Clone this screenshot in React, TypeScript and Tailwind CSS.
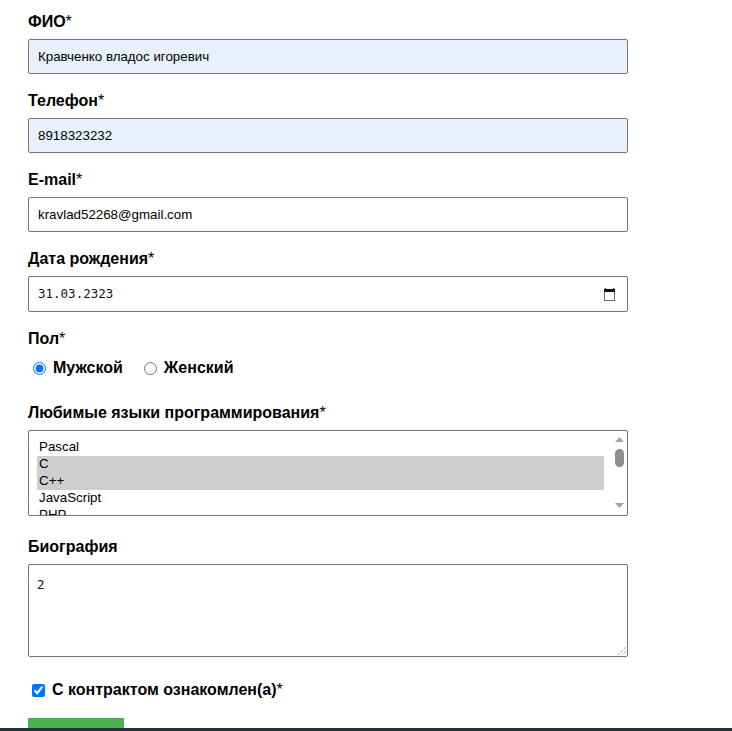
import React from "react";

function Label({ text, req = true }: { text: string; req?: boolean }) {
  return (
    <div className="text-[16px] leading-[18px] font-bold text-black">
      {text}
      {req && <span className="font-normal">*</span>}
    </div>
  );
}

function TextBox({ value, filled }: { value: string; filled?: boolean }) {
  return (
    <div
      className={
        "mt-[8px] h-[35px] w-[600px] border border-[#767676] rounded-[2px] pl-[9px] pr-[8px] flex items-center text-[13.333px] text-black " +
        (filled ? "bg-[#e8f0fe]" : "bg-white")
      }
    >
      {value}
    </div>
  );
}

export default function App() {
  const langs = ["Pascal", "C", "C++", "JavaScript", "PHP"];
  const selected = ["C", "C++"];
  return (
    <div className="relative h-[731px] w-full overflow-hidden bg-white font-['Liberation_Sans',Arial,sans-serif] text-black">
      <div className="pl-[28px] pt-[13px] w-[628px]">
        <Label text="ФИО" />
        <TextBox value="Кравченко владос игоревич" filled />

        <div className="mt-[18px]">
          <Label text="Телефон" />
          <TextBox value="8918323232" filled />
        </div>

        <div className="mt-[18px]">
          <Label text="E-mail" />
          <TextBox value="kravlad52268@gmail.com" />
        </div>

        <div className="mt-[18px]">
          <Label text="Дата рождения" />
          <div className="mt-[8px] h-[36px] w-[600px] border border-[#767676] rounded-[2px] pl-[9px] pr-[12px] flex items-center justify-between bg-white">
            <span className="font-['DejaVu_Sans_Mono',monospace] text-[12.5px] text-[#111]">31.03.2323</span>
            <svg width="11" height="13" viewBox="0 0 11 13">
              <rect x="0.5" y="1.5" width="10" height="11" fill="none" stroke="#6e6e6e" strokeWidth="1" />
              <rect x="0" y="1" width="11" height="3" fill="#111" />
              <rect x="1" y="0" width="1" height="2" fill="#111" />
              <rect x="9" y="0" width="1" height="2" fill="#111" />
            </svg>
          </div>
        </div>

        <div className="mt-[18px]">
          <Label text="Пол" />
          <div className="mt-[11px] h-[18px] flex items-center">
            <input type="radio" checked readOnly className="m-0 ml-[5px] w-[13px] h-[13px]" />
            <span className="ml-[7px] text-[16px] leading-[18px] font-bold">Мужской</span>
            <input type="radio" checked={false} readOnly className="m-0 ml-[21px] w-[13px] h-[13px]" />
            <span className="ml-[7px] text-[16px] leading-[18px] font-bold">Женский</span>
          </div>
        </div>

        <div className="mt-[27px]">
          <Label text="Любимые языки программирования" />
          <div className="mt-[8px] h-[86px] w-[600px] border border-[#767676] rounded-[2px] bg-white flex overflow-hidden">
            <div className="flex-1 pl-[8px] pr-[8px] pt-[8px] overflow-hidden">
              {langs.map((l) => (
                <div
                  key={l}
                  className={
                    "h-[17px] leading-[15px] px-[2px] text-[13.333px] text-black " +
                    (selected.includes(l) ? "bg-[#cecece]" : "")
                  }
                >
                  {l}
                </div>
              ))}
            </div>
            <div className="w-[15px] flex flex-col items-center pt-[6px] pb-[7px]">
              <svg width="9" height="5" viewBox="0 0 9 5">
                <polygon points="4.5,0 9,5 0,5" fill="#a3a3a3" />
              </svg>
              <div className="mt-[7px] h-[18px] w-[9px] rounded-full bg-[#8f8f8f]" />
              <div className="flex-1" />
              <svg width="9" height="5" viewBox="0 0 9 5">
                <polygon points="0,0 9,0 4.5,5" fill="#a3a3a3" />
              </svg>
            </div>
          </div>
        </div>

        <div className="mt-[22px]">
          <Label text="Биография" req={false} />
          <div className="relative mt-[8px] h-[93px] w-[600px] border border-[#767676] rounded-[2px] bg-white px-[8px] pt-[7px]">
            <span className="font-['DejaVu_Sans_Mono',monospace] text-[12.5px] leading-[15px] text-[#111]">2</span>
            <svg className="absolute right-[1px] bottom-[1px]" width="9" height="9" viewBox="0 0 9 9">
              <line x1="9" y1="1" x2="1" y2="9" stroke="#7a7a7a" strokeWidth="1" strokeDasharray="1 1" />
              <line x1="9" y1="5" x2="5" y2="9" stroke="#7a7a7a" strokeWidth="1" strokeDasharray="1 1" />
            </svg>
          </div>
        </div>

        <div className="mt-[24px] h-[18px] flex items-center">
          <input type="checkbox" checked readOnly className="m-0 ml-[4px] w-[13px] h-[13px]" />
          <span className="ml-[7px] text-[16px] leading-[18px] font-bold">
            С контрактом ознакомлен(а)<span className="font-normal">*</span>
          </span>
        </div>

        <div className="mt-[19px] h-[40px] w-[96px] bg-[#4caf50]" />
      </div>
      <div className="absolute bottom-0 left-0 right-0 h-[3px] bg-[#23313a]" />
    </div>
  );
}
